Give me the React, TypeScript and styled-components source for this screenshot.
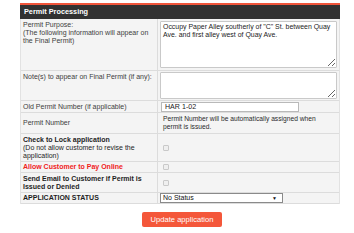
import React from "react";
import styled, { createGlobalStyle } from "styled-components";

const Global = createGlobalStyle`
  html, body { margin: 0; padding: 0; background: #fff; }
  body { font-family: "Liberation Sans", Arial, sans-serif; }
`;

const Page = styled.div`
  padding: 3px 14px 0 20px;
  width: 354px;
  box-sizing: border-box;
`;

const Panel = styled.section`
  width: 320px;
  display: flex;
  flex-direction: column;
  color: #3a3a3a;
  font-size: 7px;
  line-height: 8px;
`;

const Header = styled.div`
  box-sizing: border-box;
  height: 16px;
  background: #323232;
  border-top: 2px solid #f1553b;
  color: #fff;
  font-weight: bold;
  font-size: 7.3px;
  display: flex;
  align-items: center;
  padding: 0 3px 1px 4px;
`;

const Body = styled.div`
  border-left: 1px solid #e2e2e2;
  border-right: 1px solid #e2e2e2;
  display: flex;
  flex-direction: column;
`;

const Row = styled.div<{ $h: number }>`
  display: grid;
  grid-template-columns: 137px 1fr;
  box-sizing: border-box;
  min-height: ${(p) => p.$h}px;
  border-bottom: 1px solid #dcdcdc;
  background: #f4f4f4;
`;

const Label = styled.div<{ $strong?: boolean; $red?: boolean; $top?: boolean }>`
  border-right: 1px solid #dcdcdc;
  padding: ${(p) => (p.$top ? "2px 3px 0 2px" : "0 3px 0 2px")};
  display: flex;
  flex-direction: column;
  justify-content: ${(p) => (p.$top ? "flex-start" : "center")};
  font-weight: ${(p) => (p.$strong ? "bold" : "normal")};
  color: ${(p) => (p.$red ? "#f0221c" : p.$strong ? "#1e1e1e" : "#404040")};
`;

const Sub = styled.span`
  font-weight: normal;
`;

const Value = styled.div`
  display: flex;
  align-items: center;
  padding: 0 2px 0 2px;
  font-size: 6.7px;
  color: #2a2a2a;
`;

const Note = styled.div`
  padding-left: 3px;
  max-width: 156px;
`;

const TextArea = styled.textarea<{ $h: number }>`
  display: block;
  box-sizing: border-box;
  width: 177px;
  height: ${(p) => p.$h}px;
  margin: 0;
  font-family: "Liberation Sans", Arial, sans-serif;
  font-size: 6.95px;
  line-height: 8px;
  color: #222;
  border: 1px solid #c9c9c9;
  border-radius: 1px;
  background: #fff;
  padding: 1px 0 1px 2px;
  resize: vertical;
  outline: none;
`;

const TextInput = styled.input`
  display: block;
  box-sizing: border-box;
  width: 138px;
  height: 10px;
  margin: 0 0 0 1px;
  font-family: "Liberation Sans", Arial, sans-serif;
  font-size: 7.1px;
  color: #222;
  border: 1px solid #b9b9b9;
  background: #fff;
  padding: 0 3px;
  outline: none;
`;

const Check = styled.span`
  display: inline-block;
  box-sizing: border-box;
  width: 6px;
  height: 6px;
  border: 1px solid #c9c9c9;
  border-radius: 1px;
  background: #efefef;
  margin-left: 3px;
`;

const Select = styled.div`
  box-sizing: border-box;
  width: 123px;
  height: 10px;
  border: 1px solid #8a8a8a;
  background: #fff;
  display: flex;
  align-items: center;
  justify-content: space-between;
  padding: 0 5px 0 2px;
  font-size: 7px;
  color: #111;
`;

const Arrow = styled.span`
  font-size: 5px;
  line-height: 5px;
  color: #111;
`;

const Actions = styled.div`
  display: flex;
  justify-content: center;
  padding: 8px 0 0 2px;
  width: 320px;
`;

const Button = styled.button`
  box-sizing: border-box;
  height: 15px;
  width: 80px;
  background: #f4573a;
  color: #fff;
  border: none;
  border-radius: 2px;
  font-family: "Liberation Sans", Arial, sans-serif;
  font-size: 7.6px;
  padding: 0;
  line-height: 15px;
`;

export default function App() {
  return (
    <>
      <Global />
      <Page>
        <Panel>
          <Header>Permit Processing</Header>
          <Body>
            <Row $h={52}>
              <Label $top>
                <span>Permit Purpose:</span>
                <span>(The following information will appear on the Final Permit)</span>
              </Label>
              <Value>
                <TextArea
                  $h={47}
                  defaultValue={'Occupy Paper Alley southerly of "C" St. between Quay Ave. and first alley west of Quay Ave.'}
                />
              </Value>
            </Row>
            <Row $h={30}>
              <Label $top>Note(s) to appear on Final Permit (if any):</Label>
              <Value>
                <TextArea $h={27} defaultValue="" />
              </Value>
            </Row>
            <Row $h={12}>
              <Label>Old Permit Number (if applicable)</Label>
              <Value>
                <TextInput defaultValue="HAR 1-02" />
              </Value>
            </Row>
            <Row $h={21}>
              <Label>Permit Number</Label>
              <Value>
                <Note>Permit Number will be automatically assigned when permit is issued.</Note>
              </Value>
            </Row>
            <Row $h={28}>
              <Label $strong>
                <span>Check to Lock application</span>
                <Sub>(Do not allow customer to revise the application)</Sub>
              </Label>
              <Value>
                <Check />
              </Value>
            </Row>
            <Row $h={11}>
              <Label $strong $red>Allow Customer to Pay Online</Label>
              <Value>
                <Check />
              </Value>
            </Row>
            <Row $h={20}>
              <Label $strong>Send Email to Customer if Permit is Issued or Denied</Label>
              <Value>
                <Check />
              </Value>
            </Row>
            <Row $h={11}>
              <Label $strong>APPLICATION STATUS</Label>
              <Value>
                <Select>
                  No Status
                  <Arrow>▼</Arrow>
                </Select>
              </Value>
            </Row>
          </Body>
        </Panel>
        <Actions>
          <Button>Update application</Button>
        </Actions>
      </Page>
    </>
  );
}
